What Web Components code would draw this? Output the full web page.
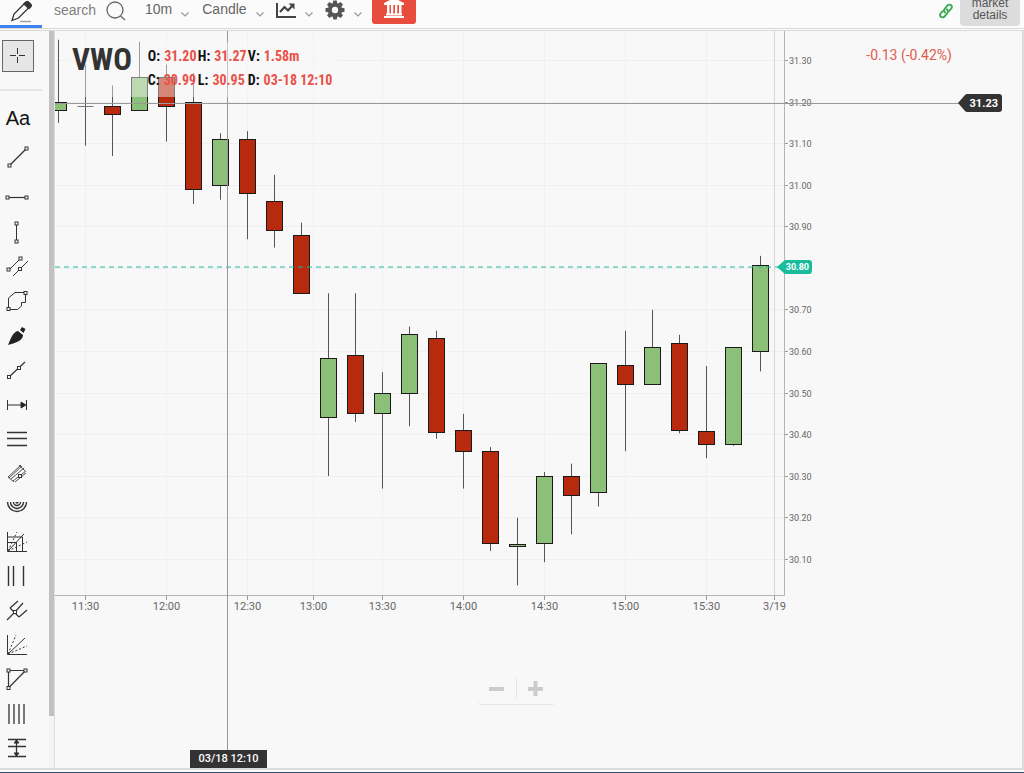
<!DOCTYPE html>
<html lang="en">
<head>
<meta charset="utf-8">
<meta name="viewport" content="width=device-width, initial-scale=1">
<title>VWO chart</title>
<style>
  body { margin: 0; font-family: Roboto, "Liberation Sans", sans-serif; }
</style>
</head>
<body>
<trading-app></trading-app>
<script>
const define = (name, markup, setup) => customElements.define(name, class extends HTMLElement {
  constructor() {
    super();
    this.attachShadow({ mode: 'open' }).innerHTML = markup;
  }
  connectedCallback() { if (setup) setup(this, this.shadowRoot); }
});

const node = (x, y) => `<rect x="${x - 1.5}" y="${y - 1.5}" width="3" height="3" fill="#f8f8f8"/>`;
const ICONS = {
  cross: '<path d="M9.500 2v6M9.500 11v6M2 9.500h6M11 9.500h6"/>',
  trend: '<path d="M2.500 17.500L19.500 .5" stroke-width="1.300"/>' + node(2.5, 17.5) + node(19.5, 0.5),
  hline: '<path d="M1 10.500H19" stroke-width="1.200"/>' + node(0.5, 10.5) + node(19.5, 10.5),
  vline: '<path d="M9.500 1V18"/>' + node(9.5, 0.5) + node(9.5, 18.5),
  channel: '<path d="M2 13L13 2M6 19L21 4"/>' + node(1.5, 12.5) + node(13.5, 1.5) + node(13, 12),
  polygon: '<path d="M1.500 17V6L8 .5H18.500V10.500H14.500V14L10.500 17.500H1.500Z"/>' + node(1.5, 17) + node(18.5, 1),
  brush: '<path d="M1 19C4 12 6 6 11 5L16 9C16 15 8 17 1 19Z" fill="#222" stroke="none"/><path d="M13 4L15 1L18.500 3L16.500 7Z" fill="#222" stroke="none"/>',
  ray: '<path d="M2 17L18 2" stroke-width="1.200"/>' + node(2, 17) + node(12, 8),
  measure: '<path d="M.5 5v10M19.500 5v10M1 10h15"/><path d="M14 7L19 10L14 13Z" fill="#222"/>',
  levels: '<path d="M0 3.500H20M0 9.500H20M0 16.500H20" stroke-width="1.400"/>',
  pitch: '<path d="M1 14L14 2M2 15L15 3M4 16L17 5M6 18L19 8M8 19L19 10M1 14L7 19M12 2L18 8" stroke="#555"/>' + node(13, 13),
  arcs: '<path d="M.5 4a9.500 9.500 0 0 0 19 0M3.500 4a6.500 6.500 0 0 0 13 0M6.500 4a3.500 3.500 0 0 0 7 0M9 4a1 1 0 0 0 2 0" stroke-width="1.400"/>',
  fan: '<path d="M.5 0V19.500H20M1 5H15.500V19M1 10.500H9.500V19M1 19L17 2"/><path d="M1 19L10 0M1 19L20 10" stroke-dasharray="2 2"/>',
  timezones: '<path d="M1.500 0V20M6.500 0V20M16.500 0V20" stroke-width="1.400"/>',
  fork: '<path d="M0 19L8 11M8 11L16 2M3 7L11 0M3 7L12 16M12 16L20 9" stroke-width="1.200"/>' + node(8, 11),
  rays: '<path d="M.5 0V19.500H20M1 19L18 3"/><path d="M1 19L9 0M1 19L20 11" stroke-dasharray="2 2"/>',
  triangle: '<path d="M1.500 1.500H18.500L1.500 19Z" stroke-width="1.200"/>' + node(1.5, 1.5) + node(18.5, 1.5) + node(1.5, 19),
  cycles: '<path d="M2 0V20M7 0V20M12 0V20M17 0V20" stroke-width="1.300"/>',
  range: '<path d="M1 1.500H19M1 8.500H19M1 18.500H19M9.500 2V18" stroke-width="1.300"/><path d="M7 5L9.500 2L12 5ZM7 15L9.500 18L12 15Z" fill="#222"/>'
};

define('tool-button', `
<style>
  :host { display: flex; align-items: center; }
  button { display: flex; align-items: center; justify-content: center; width: 34px; height: 32px;
    padding: 0; border: 0; background: none; color: #111; font: 20px "Liberation Sans", sans-serif; }
  :host([icon="text"]) button { width: 36px; }
  :host([active]) button { box-sizing: border-box; width: 32px; height: 32px; margin-left: 2px; background: #e6e6e6; border: 1px solid #666; }
  svg { width: 20px; height: 20px; overflow: visible; fill: none; stroke: #333; stroke-width: 1; }
</style>
<button type="button"></button>`, (el, root) => {
  const icon = el.getAttribute('icon');
  const button = root.querySelector('button');
  button.setAttribute('aria-label', el.getAttribute('label'));
  button.innerHTML = icon === 'text' ? 'Aa' : `<svg viewBox="0 0 20 20" aria-hidden="true">${ICONS[icon]}</svg>`;
});

define('drawing-tools', `
<style>
  :host { display: flex; flex-direction: column; box-sizing: border-box; width: 49px; padding: 9px 0 3px; background: #f8f8f8; }
  hr { width: 42px; height: 2px; margin: 17px 0 8px; border: 0; background: #e5e5e5; }
  .main tool-button { height: 39px; }
  .more { flex: 1; display: flex; flex-direction: column; }
  .more tool-button { flex: 1; }
</style>
<tool-button icon="cross" label="Crosshair" active></tool-button>
<hr>
<div class="main">
  <tool-button icon="text" label="Text"></tool-button>
  <tool-button icon="trend" label="Segment"></tool-button>
  <tool-button icon="hline" label="Horizontal"></tool-button>
</div>
<div class="more">
  ${['vline', 'channel', 'polygon', 'brush', 'ray', 'measure', 'levels', 'pitch', 'arcs', 'fan', 'timezones', 'fork', 'rays', 'triangle', 'cycles', 'range']
    .map(n => `<tool-button icon="${n}" label="${n}"></tool-button>`).join('')}
</div>`);

define('drop-arrow', `
<style>
  :host { display: block; width: 8px; height: 5px; }
  svg { display: block; fill: none; stroke: #999; }
</style>
<svg width="8" height="5" viewBox="0 0 8 5"><path d="M.5 .5L4 4L7.500 .5" stroke-width="1.200"/></svg>`);

define('top-bar', `
<style>
  :host { display: flex; align-items: flex-start; box-sizing: border-box; height: 31px; overflow: hidden; background: #fbfbfb;
    border-bottom: 3px double #d9d9d9; font: 14px/18px "Liberation Sans", sans-serif; color: #666; }
  button { display: flex; align-items: flex-start; padding: 0; border: 0; background: none; font: inherit; color: inherit; }
  svg { display: block; }
  .draw { box-sizing: border-box; width: 42px; height: 28px; padding: 1px 0 0 10px; border-bottom: 3px solid #3a83f0; }
  .search { display: flex; align-items: flex-start; margin-left: 12px; width: 74px; }
  input { width: 50px; height: 18px; margin-top: 1px; padding: 0; border: 0; background: none; font: inherit; color: #777; }
  input::placeholder { color: #808080; opacity: 1; }
  .menu { gap: 9px; }
  .menu drop-arrow { margin-top: 12px; }
  .period { margin-left: 17px; }
  .style { margin-left: 13px; }
  .study { margin-left: 12px; }
  .setup { margin-left: 12px; }
  .bank { align-items: flex-end; justify-content: center; box-sizing: border-box; width: 44px; height: 24px; padding-bottom: 6px;
    margin-left: 10px; border-radius: 0 0 3px 3px; background: #e74c3c; }
  .link { margin: 3px 7px 0 auto; }
  .details { display: flex; align-items: flex-end; justify-content: center; box-sizing: border-box; width: 60px; height: 26px; padding-bottom: 5px; margin-right: 4px;
    border-radius: 0 0 4px 4px; background: #dcdcdc; color: #555; font-size: 12px; line-height: 12px; text-align: center; }
</style>
<button class="draw" type="button" aria-label="Draw">
  <svg width="24" height="22" viewBox="0 0 24 22" fill="none" stroke="#333" stroke-width="1.300"><path d="M2 19.500L4 13L15 2L19.500 6L8.500 17Z"/><path d="M14 3L16 1Q17 0 18.500 1L21 3.500Q22 5 20.500 6L19 7.500Z" fill="#333"/><path d="M10 20.500H21" stroke="#999"/></svg>
</button>
<label class="search"><input type="text" placeholder="search" aria-label="search">
  <svg width="22" height="22" viewBox="0 0 22 22" fill="none" stroke="#666" stroke-width="1.300"><circle cx="11" cy="10" r="8"/><path d="M16.500 16L21 20"/></svg>
</label>
<button class="menu period" type="button">10m<drop-arrow></drop-arrow></button>
<button class="menu style" type="button">Candle<drop-arrow></drop-arrow></button>
<button class="menu study" type="button" aria-label="Studies">
  <svg width="20" height="20" viewBox="0 0 20 20" fill="none" stroke="#444"><path d="M1 3V17H20" stroke-width="2"/><path d="M4 12L8.500 7L12 10.500L17 5" stroke-width="2.200"/><path d="M12.500 3.500H18.500V9.500Z" fill="#444" stroke="none"/></svg>
  <drop-arrow></drop-arrow></button>
<button class="menu setup" type="button" aria-label="Settings">
  <svg width="20" height="20" viewBox="0 0 20 20"><g fill="#555"><circle cx="10" cy="10" r="7"/><path id="tooth" d="M7.500 4L8.300 .5H11.700L12.500 4V16L11.700 19.500H8.300L7.500 16Z"/><use href="#tooth" transform="rotate(45 10 10)"/><use href="#tooth" transform="rotate(90 10 10)"/><use href="#tooth" transform="rotate(135 10 10)"/></g><circle cx="10" cy="10" r="3.200" fill="#fbfbfb"/></svg>
  <drop-arrow></drop-arrow></button>
<button class="bank" type="button" aria-label="Broker">
  <svg width="20" height="20" viewBox="0 0 20 20" fill="#fff"><path d="M10 0L20 5V7H0V5ZM3 7h2.500v9H3zM7 7h2.300v9H7zM11 7h2.300v9H11zM15 7h2.500v9H15zM2 15.500H18V17.500H2zM0 18H20V20H0z"/></svg>
</button>
<button class="link" type="button" aria-label="Link">
  <svg width="14" height="16" viewBox="0 0 14 16" fill="none" stroke="#3cab57" stroke-width="1.900" stroke-linecap="round"><path d="M6 9.500C4.500 8 5 6.500 6 5.500L8.500 2.500C10 1 12 1.500 12.700 3C13.500 4.500 12.500 6 10 8"/><path d="M8 6.500C9.500 8 9 9.500 8 10.500L5.500 13.500C4 15 2 14.500 1.300 13C.5 11.500 1.500 10 4 8"/></svg>
</button>
<button class="details" type="button">market<br>details</button>`);

define('quote-legend', `
<style>
  :host { display: flex; align-items: flex-start; gap: 16px; box-sizing: border-box; padding: 0 6px 0 4px; height: 55px; background: rgba(248,248,248,.45);
    font-family: "Roboto Condensed", "Liberation Sans Narrow", Roboto, sans-serif; font-weight: 700; color: #111; }
  h1 { margin: 0; font-size: 31px; line-height: 36px; color: #333; }
  dl { display: grid; grid-template-columns: 50px 50px auto; margin: 2px 0 0; font-size: 14px; line-height: 24px; white-space: nowrap; }
  div { display: flex; gap: 4px; }
  dd { margin: 0; color: #e8524a; }
</style>
<h1>VWO</h1>
<dl>
  <div><dt>O:</dt><dd>31.20</dd></div><div><dt>H:</dt><dd>31.27</dd></div><div><dt>V:</dt><dd>1.58m</dd></div>
  <div><dt>C:</dt><dd>30.99</dd></div><div><dt>L:</dt><dd>30.95</dd></div><div><dt>D:</dt><dd>03-18 12:10</dd></div>
</dl>`);

define('price-tag', `
<style>
  :host { display: flex; align-items: center; height: 18px; color: #fff; font-weight: 700; font-size: 11px; --tag: #333; }
  :host([small]) { height: 14px; font-size: 9px; --tag: #1abc9c; }
  svg { width: 9px; height: 100%; fill: var(--tag); }
  span { display: flex; align-items: center; height: 100%; padding: 0 4px 0 3px; border-radius: 0 3px 3px 0; background: var(--tag); }
  :host([small]) span { padding: 0 3px 0 0; }
</style>
<svg viewBox="0 0 9 18" preserveAspectRatio="none"><path d="M0 9L7 1Q8 0 9 0V18Q8 18 7 17Z"/></svg><span><slot></slot></span>`);

define('zoom-control', `
<style>
  :host { display: flex; align-items: center; width: 77px; height: 32px; border-radius: 3px; box-shadow: 0 1px 1px rgba(0,0,0,.08); background: #f8f8f8; }
  button { flex: 1; display: flex; justify-content: center; padding: 0; border: 0; background: none; }
  button + button { border-left: 1px solid #e6e6e6; }
  svg { margin: 3px 0; fill: #ccc; }
</style>
<button type="button" aria-label="Zoom out"><svg width="15" height="15"><path d="M0 6h15v4H0z"/></svg></button>
<button type="button" aria-label="Zoom in"><svg width="15" height="15"><path d="M0 6h15v4H0zM5.500 0h4v15h-4z"/></svg></button>`);

/* open, high, low, close */
const BARS = [
  [31.18, 31.35, 31.15, 31.20], [31.19, 31.29, 31.095, 31.19], [31.19, 31.24, 31.07, 31.17],
  [31.18, 31.345, 31.18, 31.26], [31.26, 31.29, 31.105, 31.19], [31.20, 31.27, 30.955, 30.99],
  [31.00, 31.125, 30.965, 31.11], [31.11, 31.13, 30.87, 30.98], [30.96, 31.025, 30.85, 30.89],
  [30.88, 30.91, 30.74, 30.74], [30.44, 30.74, 30.30, 30.583], [30.59, 30.74, 30.43, 30.45],
  [30.45, 30.55, 30.27, 30.50], [30.50, 30.66, 30.42, 30.64], [30.63, 30.65, 30.39, 30.405],
  [30.41, 30.45, 30.27, 30.36], [30.36, 30.37, 30.12, 30.137], [30.131, 30.20, 30.037, 30.136],
  [30.137, 30.31, 30.093, 30.30], [30.30, 30.33, 30.16, 30.253], [30.26, 30.57, 30.227, 30.57],
  [30.565, 30.65, 30.36, 30.52], [30.52, 30.70, 30.52, 30.61], [30.62, 30.64, 30.403, 30.41],
  [30.407, 30.565, 30.343, 30.377], [30.377, 30.61, 30.373, 30.61], [30.60, 30.83, 30.552, 30.807]
];
const TIMES = [['11:30', 1], ['12:00', 4], ['12:30', 7], ['13:00', 9.46], ['13:30', 12], ['14:00', 15],
  ['14:30', 18], ['15:00', 21], ['15:30', 24], ['3/19', 26.5]];

define('candle-chart', `
<style>
  :host { display: block; position: relative; overflow: hidden; min-height: 460px; background: #f8f8f8; border-right: 2px solid #ddd; }
  .plot { position: absolute; inset: 0; width: 100%; height: 100%; }
  text { font-family: Roboto, sans-serif; fill: #666; }
  quote-legend { position: absolute; left: 13px; top: 11px; }
  .change { position: absolute; right: 70px; top: 15px; font-size: 14px; line-height: 18px; color: #e05a50; }
  .cursor-price { position: absolute; right: 20px; top: 63px; }
  .last { position: absolute; right: 210px; }
  .cursor-date { position: absolute; left: 135px; bottom: 0; width: 77px; height: 18px; background: #333; color: #fff; font-size: 11px; font-weight: 500; line-height: 17px; text-align: center; }
  zoom-control { position: absolute; left: calc(50% - 61px); bottom: 64px; }
</style>
<svg class="plot"></svg>
<quote-legend></quote-legend>
<div class="change">-0.13 (-0.42%)</div>
<price-tag class="cursor-price">31.23</price-tag>
<price-tag class="last" small>30.80</price-tag>
<div class="cursor-date">03/18 12:10</div>
<zoom-control></zoom-control>`, (el, root) => {
  const svg = root.querySelector('svg');
  const draw = () => {
    const W = el.clientWidth, H = el.clientHeight;
    if (!W) return;
    const right = W - 238, bottom = H - 173;
    const y = p => (31.371 - p) / 1.357 * bottom;
    const x = i => right - 23.4 - (BARS.length - 1 - i) * 27.01;
    const snap = v => Math.floor(v) + 0.5;
    let out = '';
    for (let n = 0; n < 13; n++) {
      const p = 31.3 - n / 10, py = snap(y(p));
      out += `<path d="M0 ${py}H${right}" stroke="#f0f0f0"/>`;
      if (n === 5) continue;
      out += `<path d="M${right} ${py}h4" stroke="#999"/><text x="${right + 5}" y="${py + 3}" font-size="9">${p.toFixed(2)}</text>`;
    }
    for (const [label, i] of TIMES) {
      const px = snap(x(i));
      out += `<path d="M${px} 0V${bottom}" stroke="${i > 26 ? '#d8d8d8' : '#f0f0f0'}"/><path d="M${px} ${bottom}v5" stroke="#999"/>
        <text x="${px}" y="${bottom + 15}" font-size="11" text-anchor="middle">${label}</text>`;
    }
    BARS.forEach(([o, h, l, c], i) => {
      const px = snap(x(i)), top = snap(y(Math.max(o, c))), base = snap(y(Math.min(o, c)));
      out += `<path d="M${px} ${y(h)}V${y(l)}" stroke="#555"/>`;
      out += o === c ? `<path d="M${px - 8} ${top}h16" stroke="#777"/>`
        : `<rect x="${px - 8}" y="${top}" width="16" height="${Math.max(base - top, 2)}" fill="${c > o ? '#8cc079' : '#b82a0d'}" stroke="#1a1a1a"/>`;
    });
    const last = y(30.804);
    out += `<path d="M0 ${Math.round(last)}H${right - 5}" stroke="#1abc9c" stroke-opacity=".5" stroke-width="2" stroke-dasharray="5 4"/>
      <path d="M${right + 0.5} 0V${bottom + 0.5}H0" fill="none" stroke="#b5b5b5"/>
      <path d="M0 72.500H${W - 62}M172.500 0V${H}" stroke="#999"/>`;
    svg.innerHTML = out;
    root.querySelector('.last').style.top = Math.round(last - 7) + 'px';
  };
  draw();
  new ResizeObserver(draw).observe(el);
});

define('trading-app', `
<style>
  :host { display: flex; flex-direction: column; min-height: 100vh; background: #fafafa; }
  main { flex: 1; display: flex; }
  .scroll { width: 5px; background: linear-gradient(#c1c1c1, #c1c1c1) top / 100% 93% no-repeat #f4f4f4; border-right: 1px solid #ddd; }
  candle-chart { flex: 1; min-width: 0; }
  footer { height: 2px; border-top: 2px solid #ddd; border-bottom: 1px solid #34506a; }
</style>
<top-bar></top-bar>
<main>
  <drawing-tools></drawing-tools>
  <div class="scroll"></div>
  <candle-chart></candle-chart>
</main>
<footer></footer>`);
</script>
</body>
</html>
